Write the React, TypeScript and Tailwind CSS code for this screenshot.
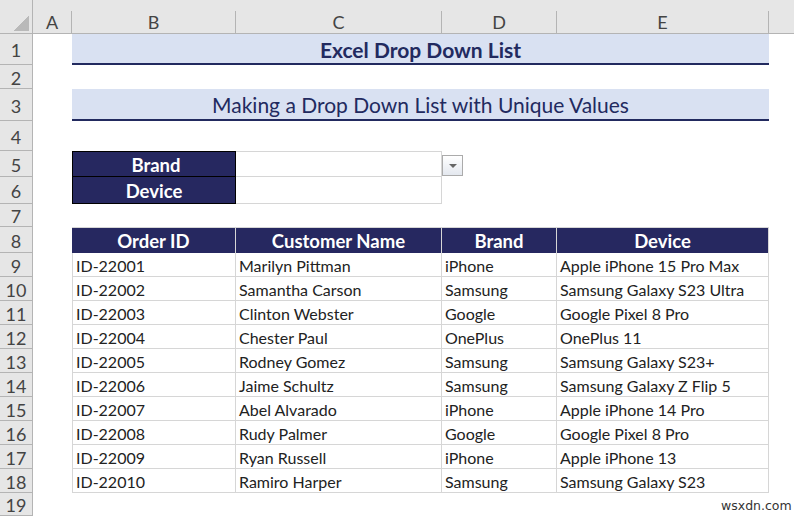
const COLUMNS = ['A', 'B', 'C', 'D', 'E'];

const ORDERS = [
  ['ID-22001', 'Marilyn Pittman', 'iPhone', 'Apple iPhone 15 Pro Max'],
  ['ID-22002', 'Samantha Carson', 'Samsung', 'Samsung Galaxy S23 Ultra'],
  ['ID-22003', 'Clinton Webster', 'Google', 'Google Pixel 8 Pro'],
  ['ID-22004', 'Chester Paul', 'OnePlus', 'OnePlus 11'],
  ['ID-22005', 'Rodney Gomez', 'Samsung', 'Samsung Galaxy S23+'],
  ['ID-22006', 'Jaime Schultz', 'Samsung', 'Samsung Galaxy Z Flip 5'],
  ['ID-22007', 'Abel Alvarado', 'iPhone', 'Apple iPhone 14 Pro'],
  ['ID-22008', 'Rudy Palmer', 'Google', 'Google Pixel 8 Pro'],
  ['ID-22009', 'Ryan Russell', 'iPhone', 'Apple iPhone 13'],
  ['ID-22010', 'Ramiro Harper', 'Samsung', 'Samsung Galaxy S23'],
];

const HEADERS = ['Order ID', 'Customer Name', 'Brand', 'Device'];

function RowHead({ n }: { n: number }) {
  return (
    <div className="flex items-center justify-center bg-[#e6e6e6] border-b border-r border-[#b4b4b4] text-[18px] text-[#444] pt-[3px]">
      {n}
    </div>
  );
}

function Blank({ span = false }: { span?: boolean }) {
  return <div className={span ? 'col-span-4' : ''} />;
}

export default function App() {
  return (
    <div className="relative w-[794px] h-[516px] overflow-hidden bg-white font-['Lato','Open_Sans',sans-serif] text-[#222]">
      <div className="grid grid-cols-[33px_39px_164px_206px_115px_212px_25px] grid-rows-[34px_31px_24px_32px_30px_26px_27px_23px_26px_repeat(10,24px)_23px]">
        {/* column headers */}
        <div className="flex items-end justify-end bg-[#e6e6e6] border-b border-r border-[#b4b4b4] pt-[11px] pr-[3px] pb-[2px]">
          <div className="w-[16px] h-[16px] bg-[linear-gradient(135deg,transparent_50%,#b9b9b9_50%)]" />
        </div>
        {COLUMNS.map((c) => (
          <div key={c} className="bg-[#e6e6e6] border-b border-[#b4b4b4] pt-[11px]">
            <div className="flex h-full items-center justify-center border-r border-[#b4b4b4] text-[18px] text-[#444]">{c}</div>
          </div>
        ))}
        <div className="bg-[#e6e6e6] border-b border-[#b4b4b4]" />

        {/* row 1 */}
        <RowHead n={1} />
        <Blank />
        <div className="col-span-4 flex items-center justify-center bg-[#d9e1f2] border-b-2 border-[#222a5f] pt-[2px] text-[21px] font-bold text-[#222a5f]">
          Excel Drop Down List
        </div>
        <Blank />

        {/* row 2 */}
        <RowHead n={2} />
        <Blank />
        <Blank span />
        <Blank />

        {/* row 3 */}
        <RowHead n={3} />
        <Blank />
        <div className="col-span-4 flex items-center justify-center bg-[#d9e1f2] border-b-2 border-[#222a5f] pt-[2px] text-[21px] text-[#222a5f]">
          Making a Drop Down List with Unique Values
        </div>
        <Blank />

        {/* row 4 */}
        <RowHead n={4} />
        <Blank />
        <Blank span />
        <Blank />

        {/* row 5 */}
        <RowHead n={5} />
        <Blank />
        <div className="flex items-center justify-center bg-[#262860] border border-black pt-[3px] pl-[4px] text-[18.5px] font-bold text-white">Brand</div>
        <div className="relative border border-l-0 border-[#d6d6d6]">
          <div className="absolute left-[206px] top-[3px] flex h-[21px] w-[21px] items-center justify-center border border-[#ababab] bg-[linear-gradient(#ffffff,#e4e8ef)]">
            <div className="h-0 w-0 border-x-[4px] border-t-[4px] border-x-transparent border-t-[#666]" />
          </div>
        </div>
        <div className="col-span-2" />
        <Blank />

        {/* row 6 */}
        <RowHead n={6} />
        <Blank />
        <div className="flex items-center justify-center bg-[#262860] border border-t-0 border-black pt-[3px] text-[18.5px] font-bold text-white">Device</div>
        <div className="border border-l-0 border-t-0 border-[#d6d6d6]" />
        <div className="col-span-2" />
        <Blank />

        {/* row 7 */}
        <RowHead n={7} />
        <Blank />
        <Blank span />
        <Blank />

        {/* row 8 */}
        <RowHead n={8} />
        <Blank />
        {HEADERS.map((h) => (
          <div key={h} className="flex items-center justify-center bg-[#262860] border-t border-r border-[#d6d6d6] first:border-l pt-[2px] text-[18.5px] font-bold text-white">
            {h}
          </div>
        ))}
        <Blank />

        {/* rows 9-18 */}
        {ORDERS.map((row, i) => (
          <div key={row[0]} className="contents">
            <RowHead n={i + 9} />
            <Blank />
            {row.map((cell, j) => (
              <div
                key={j}
                className={`flex items-center whitespace-nowrap border-b border-r border-[#d6d6d6] pl-[3px] pt-[2px] text-[16px] text-[#222] ${j === 0 ? 'border-l' : ''}`}
              >
                {cell}
              </div>
            ))}
            <Blank />
          </div>
        ))}

        {/* row 19 */}
        <RowHead n={19} />
        <Blank />
        <Blank span />
        <div />
      </div>

      <span className="absolute left-[721px] top-[497px] font-['DejaVu_Sans',sans-serif] text-[12.5px] text-[#333]">wsxdn.com</span>
    </div>
  );
}
